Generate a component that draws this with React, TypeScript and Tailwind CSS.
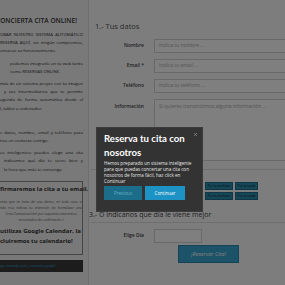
import { X } from 'lucide-react'

type Line = { t: string; j?: boolean; ml?: string }

// intro text as it shows inside the clipped column, one entry per line
const INTRO: Line[][] = [
  [
    { t: 'OBAR NUESTRO SISTEMA AUTOMÁTICO', j: true },
    { t: 'RESERVA AQUÍ, sin ningún compromiso,', j: true },
    { t: 'onozcas su funcionamiento.' },
  ],
  [
    { t: 'podemos integrarlo en tu web tanto', j: true, ml: 'pl-[10px]' },
    { t: 'como RESERVAS ONLINE.', ml: 'pl-[10px]' },
  ],
  [
    { t: 'más de un sistema propio con tu imagen', j: true },
    { t: 'y sus intermediarios que te permite', j: true, ml: 'pl-[4px]' },
    { t: 'agenda de forma automática desde el', j: true },
    { t: 'l, tablet u ordenador.' },
  ],
]

const STEPS: Line[][] = [
  [
    { t: 's datos, nombre, email y teléfono para', j: true },
    { t: 'nos en contacta contigo.' },
  ],
  [
    { t: 'es inteligentes: puedes elegir una cita', j: true },
    { t: 'indicamos qué día te viene bien y', j: true, ml: 'pl-[4px]' },
    { t: 'la hora que más te convenga', ml: 'pl-[4px]' },
  ],
]

function Block({ lines }: { lines: Line[] }) {
  return (
    <div>
      {lines.map((l, i) => (
        <div
          key={i}
          className={`${l.ml ?? ''} whitespace-nowrap ${l.j ? 'text-justify [text-align-last:justify]' : 'text-left'}`}
        >
          {l.t}
        </div>
      ))}
    </div>
  )
}

function Field({ label, placeholder }: { label: string; placeholder: string }) {
  return (
    <div className="flex items-center h-[14px] mb-[6px]">
      <span className="w-[53px] text-right text-[5px] font-semibold text-[#444]">{label}</span>
      <div className="ml-[10px] flex-1 h-[14px] bg-white border border-[#d2d2d2] px-[4px] flex items-center text-[5px] text-[#aaa] whitespace-nowrap">
        {placeholder}
      </div>
    </div>
  )
}

export default function App() {
  return (
    <div className="relative w-[285px] h-[285px] overflow-hidden bg-[#fafafa]" style={{ fontFamily: '"Open Sans", sans-serif' }}>
      <div className="flex h-full">
        {/* left info column */}
        <div className="w-[89px] shrink-0 border-r border-[#dcdcdc] bg-[#f2f2f2] overflow-hidden">
          <div className="w-[83px] text-[#333]">
            <h2 className="mt-[16px] ml-[-4px] text-[6.6px] font-semibold uppercase leading-[10px] whitespace-nowrap">CONCIERTA CITA ONLINE!</h2>
            <div className="mt-[4px] text-[4.3px] leading-[8.2px] space-y-[4px] text-[#2a2a2a]">
              {INTRO.map((b, i) => (
                <Block key={i} lines={b} />
              ))}
              <div className="h-[8px]" />
              {STEPS.map((b, i) => (
                <Block key={i} lines={b} />
              ))}
            </div>
            <div className="mt-[8px] w-[83px] border border-[#8a8a8a] border-l-0 pb-[8px]">
              <p className="mt-[3px] text-[6px] font-bold leading-[9px] whitespace-nowrap">firmaremos la cita a tu email.</p>
              <div className="mt-[5px] text-[3.4px] leading-[6px] text-center text-[#555] whitespace-nowrap">
                <p className="text-justify [text-align-last:justify]">enta que se trata de una demo, en todo caso si</p>
                <p className="text-justify [text-align-last:justify]">ndo nos indicas tu intención de formalizar una</p>
                <p>Crea Comunicación) por supuesto estaremos</p>
                <p>encantados de confirmarla :)</p>
              </div>
              <div className="mt-[3px] text-[6px] font-bold leading-[10px] whitespace-nowrap">
                <p>utilizas Google Calendar, la</p>
                <p>cluiremos tu calendario!</p>
              </div>
            </div>
            <div className="mt-[5px] w-[83px] h-[12px] bg-[#383838] flex items-center text-[3.6px] text-[#2fa9d6] whitespace-nowrap">
              ajo estando esto, necesita ayuda!
            </div>
          </div>
        </div>

        {/* form column */}
        <div className="flex-1 pl-[2px] overflow-hidden">
          <h3 className="mt-[21px] ml-[4px] text-[7.5px] text-[#555] leading-[10px]">1.- Tus datos</h3>
          <div className="mt-[8px] w-[220px]">
            <Field label="Nombre" placeholder="Indica tu nombre ..." />
            <Field label="Email *" placeholder="Indica tu email ..." />
            <Field label="Teléfono" placeholder="Indica tu teléfono ..." />
            <div className="flex items-start">
              <span className="w-[53px] text-right text-[5px] font-semibold text-[#444] mt-[4px]">Información</span>
              <div className="ml-[10px] flex-1 h-[62px] bg-white border border-[#d2d2d2] px-[4px] pt-[3px] text-[5px] text-[#aaa] whitespace-nowrap">
                Si quieres transmitirnos alguna información ...
              </div>
            </div>
          </div>
          <div className="mt-[8px] border-t border-[#ddd] w-[200px]" />
          <div className="mt-[12px] ml-[114px] flex flex-col gap-[2px]">
            {[0, 1].map((r) => (
              <div key={r} className="flex gap-[2px]">
                <span className="w-[28px] h-[8px] bg-[#2d8fb0] border border-[#1f6f8c] text-[3.3px] text-[#111] flex items-center justify-center whitespace-nowrap overflow-hidden">Por la mañana</span>
                <span className="w-[23px] h-[8px] bg-[#2d8fb0] border border-[#1f6f8c] text-[3.3px] text-[#111] flex items-center justify-center whitespace-nowrap overflow-hidden">Por la tarde</span>
              </div>
            ))}
          </div>
          <h3 className="mt-[10px] ml-[-2px] text-[7px] text-[#444] leading-[9px] whitespace-nowrap">3.- O indicanos que día le viene mejor</h3>
          <div className="mt-[3px] border-t border-[#ddd] w-[200px]" />
          <div className="mt-[6px] flex items-center">
            <span className="w-[53px] text-right text-[5px] font-semibold text-[#444]">Elige Día</span>
            <div className="ml-[10px] w-[48px] h-[14px] bg-white border border-[#d2d2d2]" />
          </div>
          <button className="mt-[2px] ml-[87px] w-[61px] h-[18px] bg-[#3aa6d0] border border-[#2a88ad] text-[5.5px] italic text-white flex items-center justify-center">
            ¡Reservar Cita!
          </button>
        </div>
      </div>

      {/* overlay */}
      <div className="absolute inset-0 bg-black/50" />

      {/* modal */}
      <div className="absolute left-[96px] top-[127px] w-[107px] h-[85px] bg-[#333333] border border-[#3c3c3c] px-[7px] pt-[4px]">
        <button className="absolute right-[4px] top-[4px] text-[#999]">
          <X className="w-[5px] h-[5px]" strokeWidth={3} />
        </button>
        <h2 className="text-[9.6px] font-bold leading-[14px] text-white" style={{ fontFamily: 'Lato, sans-serif' }}>
          Reserva tu cita con nosotros
        </h2>
        <p className="text-[4.6px] leading-[6px] text-[#e6e6e6]">
          Hemos preparado un sistema inteligente para que puedas concertar una cita con nosotros de forma fácil, haz click en Continuar
        </p>
        <div className="mt-[2px] flex gap-[3px]">
          <button className="w-[38px] h-[14px] bg-[#1b6d89] text-[4.5px] text-[#6bb0c8] flex items-center justify-center">Previous</button>
          <button className="w-[40px] h-[14px] bg-[#1c93c4] text-[4.5px] text-white flex items-center justify-center">Continuar</button>
        </div>
      </div>
    </div>
  )
}
